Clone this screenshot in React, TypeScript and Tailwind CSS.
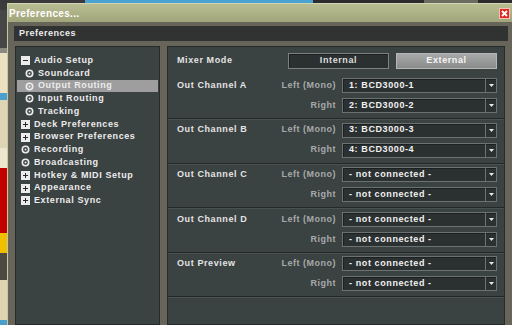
import React from "react";

const font = { fontFamily: '"Liberation Sans", Arial, sans-serif' };

type IconKind = "minus" | "plus" | "circle";

const tree: { label: string; icon: IconKind; child?: boolean; selected?: boolean }[] = [
  { label: "Audio Setup", icon: "minus" },
  { label: "Soundcard", icon: "circle", child: true },
  { label: "Output Routing", icon: "circle", child: true, selected: true },
  { label: "Input Routing", icon: "circle", child: true },
  { label: "Tracking", icon: "circle", child: true },
  { label: "Deck Preferences", icon: "plus" },
  { label: "Browser Preferences", icon: "plus" },
  { label: "Recording", icon: "circle" },
  { label: "Broadcasting", icon: "circle" },
  { label: "Hotkey & MIDI Setup", icon: "plus" },
  { label: "Appearance", icon: "plus" },
  { label: "External Sync", icon: "plus" },
];

const channels = [
  { name: "Out Channel A", left: "1: BCD3000-1", right: "2: BCD3000-2" },
  { name: "Out Channel B", left: "3: BCD3000-3", right: "4: BCD3000-4" },
  { name: "Out Channel C", left: "- not connected -", right: "- not connected -" },
  { name: "Out Channel D", left: "- not connected -", right: "- not connected -" },
  { name: "Out Preview", left: "- not connected -", right: "- not connected -" },
];

function TreeIcon({ kind }: { kind: IconKind }) {
  if (kind === "circle") {
    return (
      <svg width="9" height="9" viewBox="0 0 9 9">
        <circle cx="4.5" cy="4.5" r="3.2" fill="none" stroke="#ececec" strokeWidth="1.6" />
        <circle cx="4.5" cy="4.5" r="1" fill="#ececec" />
      </svg>
    );
  }
  return (
    <svg width="9" height="9" viewBox="0 0 9 9">
      <rect x="0" y="0" width="9" height="9" fill="#ececec" />
      <rect x="2" y="4" width="5" height="1" fill="#262a2a" />
      {kind === "plus" && <rect x="4" y="2" width="1" height="5" fill="#262a2a" />}
    </svg>
  );
}

function Dropdown({ value }: { value: string }) {
  return (
    <div className="ml-[6px] flex h-[15px] w-[155px] items-stretch border border-[#6c7171] bg-[#2b3030] shadow-[inset_1px_1px_0_#1c2020]">
      <div className="flex flex-1 items-center pl-[6px] text-[9px] font-bold tracking-[0.6px] text-[#f2f2f2]">
        {value}
      </div>
      <div className="flex w-[11px] items-center justify-center border-l border-[#6c7171]">
        <svg width="5" height="3" viewBox="0 0 5 3">
          <path d="M0 0 H5 L2.5 3 Z" fill="#e8e8e8" />
        </svg>
      </div>
    </div>
  );
}

export default function App() {
  return (
    <div className="flex h-[325px] w-[512px] flex-col overflow-hidden bg-[#3a3a3a]" style={font}>
      {/* app behind the dialog */}
      <div className="flex h-[3px] shrink-0">
        <div className="w-[85px] bg-[#3a3a3a]" />
        <div className="w-[228px] bg-[#4ba3d3]" />
        <div className="w-[111px] bg-[#2c2c2c]" />
        <div className="w-[54px] bg-[#6d6c60]" />
        <div className="flex-1 bg-[#2c2c2c]" />
      </div>
      <div className="flex min-h-0 flex-1">
        <div className="flex w-[7px] shrink-0 flex-col">
          <div className="h-[7px] bg-[#3c3c3c]" />
          <div className="h-[38px] bg-[#464646]" />
          <div className="h-[5px] bg-[#8a8a80]" />
          <div className="h-[40px] bg-[#e9e1c2]" />
          <div className="h-[7px] bg-[#4a9fcf]" />
          <div className="h-[48px] bg-[#ddd5b4]" />
          <div className="h-[20px] bg-[#ece6cc]" />
          <div className="h-[65px] bg-[#c20000]" />
          <div className="h-[20px] bg-[#f0c000]" />
          <div className="h-[27px] bg-[#4a4a40]" />
          <div className="h-[40px] bg-[#ddd5b0]" />
          <div className="flex-1 bg-[#4a9fcf]" />
        </div>

        {/* dialog window */}
        <div className="flex min-w-0 flex-1 flex-col border-l border-[#c6c8a4] bg-[#67655a]">
          <div className="flex h-[19px] shrink-0 items-center border-t border-[#d2d5b2] bg-gradient-to-b from-[#b9bd92] to-[#a1a57b] pl-[1px] pr-[2px]">
            <span className="text-[10px] font-bold tracking-[0.35px] text-white">Preferences...</span>
            <div className="ml-auto mt-[1px] flex h-[11px] w-[11px] items-center justify-center border border-[#f4c0b8] bg-[#de2a22]">
              <svg width="7" height="7" viewBox="0 0 7 7">
                <path d="M1 1 L6 6 M6 1 L1 6" stroke="#ffffff" strokeWidth="1.8" />
              </svg>
            </div>
          </div>

          <div className="ml-[6px] mr-[4px] mt-[4px] flex h-[15px] shrink-0 items-center bg-[#313333] pl-[5px]">
            <span className="text-[9px] font-bold tracking-[0.5px] text-[#ececec]">Preferences</span>
          </div>

          <div className="ml-[7px] mr-[7px] mt-[5px] flex min-h-0 flex-1 gap-[7px]">
            {/* tree */}
            <div className="w-[145px] shrink-0 border border-[#262a2a] bg-[#3b4242] pt-[7.2px]">
              {tree.map((item) => (
                <div
                  key={item.label}
                  className={`mx-px flex h-[12.75px] items-center gap-[4px] ${item.child ? "pl-[8px]" : "pl-[4px]"} ${
                    item.selected ? "bg-[#9d9e9d]" : ""
                  }`}
                >
                  <div className="flex w-[9px] justify-center">
                    <TreeIcon kind={item.icon} />
                  </div>
                  <span className="whitespace-nowrap text-[9px] font-bold tracking-[0.6px] text-[#ececec]">
                    {item.label}
                  </span>
                </div>
              ))}
            </div>

            {/* routing */}
            <div className="min-w-0 flex-1 border border-[#262a2a] bg-[#3b4242] pl-[9px] pr-[7px] pt-[6px]">
              <div className="mb-[5.4px] flex h-[16px] items-center">
                <span className="flex-1 text-[9px] font-bold tracking-[0.6px] text-[#e4e4e4]">Mixer Mode</span>
                <div className="flex h-[16px] w-[101px] items-center justify-center border border-[#7c8080] bg-[#2b3030] shadow-[inset_1px_1px_0_#1c2020]">
                  <span className="text-[9px] font-bold tracking-[0.6px] text-[#dedede]">Internal</span>
                </div>
                <div className="ml-[7px] flex h-[16px] w-[101px] items-center justify-center border border-[#b4b6b6] bg-gradient-to-b from-[#a8a9a9] to-[#8a8b8b]">
                  <span className="text-[9px] font-bold tracking-[0.6px] text-[#f6f6f6]">External</span>
                </div>
              </div>

              {channels.map((ch) => (
                <div
                  key={ch.name}
                  className="-ml-[9px] -mr-[7px] flex h-[44.6px] flex-col gap-[5px] border-b border-[#232828] pl-[9px] pr-[7px] pt-[3.6px] shadow-[0_1px_0_#4a5151]"
                >
                  <div className="flex h-[15px] items-center">
                    <span className="flex-1 text-[9px] font-bold tracking-[0.6px] text-[#e4e4e4]">{ch.name}</span>
                    <span className="text-[9px] font-bold tracking-[0.5px] text-[#a6aaaa]">Left (Mono)</span>
                    <Dropdown value={ch.left} />
                  </div>
                  <div className="flex h-[15px] items-center justify-end">
                    <span className="text-[9px] font-bold tracking-[0.5px] text-[#a6aaaa]">Right</span>
                    <Dropdown value={ch.right} />
                  </div>
                </div>
              ))}
            </div>
          </div>
        </div>
      </div>
    </div>
  );
}
